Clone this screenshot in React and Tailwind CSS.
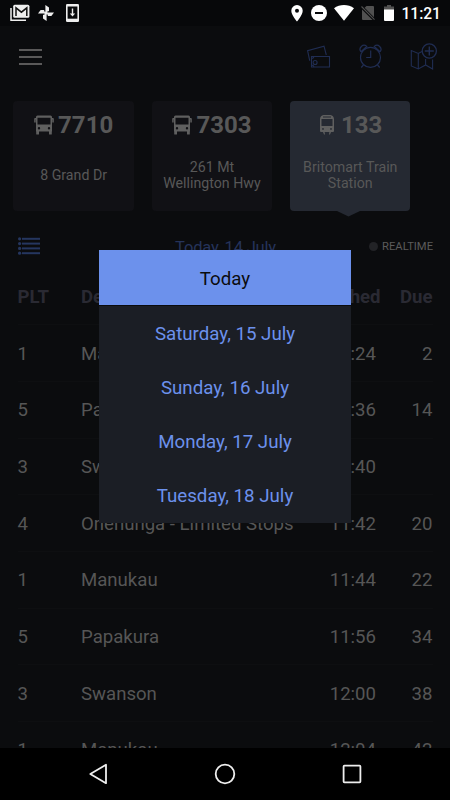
const stops = [
  { id: "7710", name: "8 Grand Dr", type: "bus" },
  { id: "7303", name: "261 Mt Wellington Hwy", type: "bus" },
  { id: "133", name: "Britomart Train Station", type: "train", active: true },
];

const departures = [
  { plt: 1, dest: "Manukau", sched: "11:24", due: 2 },
  { plt: 5, dest: "Papakura", sched: "11:36", due: 14 },
  { plt: 3, dest: "Swanson", sched: "11:40", due: "" },
  { plt: 4, dest: "Onehunga - Limited Stops", sched: "11:42", due: 20 },
  { plt: 1, dest: "Manukau", sched: "11:44", due: 22 },
  { plt: 5, dest: "Papakura", sched: "11:56", due: 34 },
  { plt: 3, dest: "Swanson", sched: "12:00", due: 38 },
  { plt: 1, dest: "Manukau", sched: "12:04", due: 42 },
];

const days = ["Today", "Saturday, 15 July", "Sunday, 16 July", "Monday, 17 July", "Tuesday, 18 July"];

function StatusBar() {
  return (
    <div className="h-[26px] shrink-0 bg-[#07080a] flex items-center justify-between pl-2.5 pr-[9px] text-white">
      <div className="flex items-center">
        <svg width="20" height="18" viewBox="0 0 20 18" fill="none">
          <path d="M1 4v12.2h15" stroke="#eee" strokeWidth="1.5" />
          <rect x="3.2" y="0.8" width="16.2" height="13" rx="1.5" fill="#eee" />
          <path d="M6 12V3.8l5.4 4.4 5.4-4.4V12" stroke="#111" strokeWidth="1.5" />
        </svg>
        <svg className="ml-2" width="16" height="16" viewBox="0 0 16 16" fill="#eee">
          <path d="M7.4 7.4V0L11 2.6V6L7.4 7.4z" />
          <path d="M8.6 7.4H16L13.4 11H10L8.6 7.4z" />
          <path d="M8.6 8.6V16L5 13.4V10l3.6-1.4z" />
          <path d="M7.4 8.6H0L2.6 5H6l1.4 3.6z" />
          <circle cx="8" cy="8" r="1.6" />
        </svg>
        <svg className="ml-3" width="13" height="18" viewBox="0 0 13 18">
          <rect width="13" height="18" rx="1.3" fill="#eee" />
          <rect x="1.6" y="2.5" width="9.8" height="12.2" fill="#08090b" />
          <path d="M5.8 4.6h1.4v5h2L6.5 12.4 3.8 9.6h2z" fill="#eee" />
        </svg>
      </div>
      <div className="flex items-center">
        <svg width="12" height="17" viewBox="0 0 12 17">
          <path fillRule="evenodd" d="M6 0a5.700 5.700 0 0 0-5.700 5.700C.3 10 6 16.500 6 16.500S11.700 10 11.700 5.700A5.700 5.700 0 0 0 6 0zm0 3.700a2 2 0 1 1 0 4 2 2 0 0 1 0-4z" fill="#fff" />
        </svg>
        <svg className="ml-2" width="16" height="16" viewBox="0 0 16 16">
          <circle cx="8" cy="8" r="8" fill="#fff" />
          <rect x="4" y="7" width="8" height="2" fill="#08090b" />
        </svg>
        <svg className="ml-[7px]" width="20" height="16" viewBox="0 0 20 16">
          <path d="M0 3.300C5.800-1.100 14.200-1.100 20 3.300L10 15.700z" fill="#fff" />
        </svg>
        <svg className="ml-[7px]" width="14" height="16" viewBox="0 0 14 16">
          <path d="M5.500 1H12q1 0 1 1v10.200L3.600 2.800zM1 4.600L11.600 15H2q-1 0-1-1z" fill="#515151" />
          <path d="M.5 1.500l13 13.200" stroke="#515151" strokeWidth="1.1" />
        </svg>
        <svg className="ml-[9px]" width="10" height="16" viewBox="0 0 10 16">
          <path d="M3 0h4v1.500h3V5H0V1.500h3z" fill="#515151" />
          <path d="M0 4.500h10V15q0 1-1 1H1q-1 0-1-1z" fill="#fff" />
        </svg>
        <span className="ml-[7.5px] text-[15.6px] leading-none font-medium mt-[3px]">11:21</span>
      </div>
    </div>
  );
}

function BusIcon() {
  return (
    <svg width="20" height="20" viewBox="0 0 20 20" fill="#5f5f5f">
      <path fillRule="evenodd" d="M3.500.5h13q1.500 0 1.500 1.500v14.500h-.2V19q0 .5-.5.500h-1.800q-.5 0-.5-.5v-2.500H5V19q0 .5-.5.500H2.700q-.5 0-.5-.5v-2.500H2V2Q2 .5 3.500.5zM3.500 2.800V9.500h13V2.800zM5 12a1.200 1.200 0 1 0 0 2.400A1.200 1.200 0 0 0 5 12zm10 0a1.200 1.200 0 1 0 0 2.400 1.200 1.200 0 0 0 0-2.400z" />
      <path d="M2.500 3H1Q.200 3 .200 4v3.500h1.500V4.500h.8zM17.500 3H19q.8 0 .8 1v3.500h-1.500V4.500h-.8z" />
    </svg>
  );
}

function TrainIcon() {
  return (
    <svg width="14" height="20" viewBox="0 0 14 20" fill="#5f5f5f">
      <path fillRule="evenodd" d="M3.500 0h7Q13.700.5 14 4v12q0 1-1 1H1q-1 0-1-1V4Q.3.5 3.500 0zM3 1.600v.8h8v-.8zM1.500 4v7h11V4zM3 13a.9.900 0 1 0 0 1.800A.9.900 0 0 0 3 13zm8 0a.9.900 0 1 0 0 1.800.9.900 0 0 0 0-1.800z" />
      <path d="M3 17h1.600l.4 2.500H4zM9.400 17H11l-1 2.500H9z" />
    </svg>
  );
}

function TopBar() {
  return (
    <header className="h-[75px] shrink-0 flex items-start justify-between pl-[19px] pr-3">
      <button className="mt-[23px] w-[23px] flex flex-col gap-[5px]">
        <span className="h-0.5 bg-[#5a5959]" />
        <span className="h-0.5 bg-[#5a5959]" />
        <span className="h-0.5 bg-[#5a5959]" />
      </button>
      <div className="flex mt-4 text-[#202d52]">
        <svg width="24" height="28" viewBox="0 0 24 28" fill="none" stroke="currentColor" strokeWidth="1.1">
          <path d="M4.500 14.500H22.500V25H4.500zM3.200 18.200H2.600L.6 8.700 17 4.200 19.300 13" />
          <circle cx="8.1" cy="20.5" r="2" />
          <path d="M4.500 16.500q2 0 2.500-2M4.500 23q2 0 2.500 2" />
        </svg>
        <svg className="ml-7" width="24" height="28" viewBox="0 0 24 28" fill="none" stroke="currentColor" strokeWidth="1.2">
          <circle cx="11.5" cy="15.4" r="10" />
          <path d="M11.700 8.500V15.500H7.200M4.500 23L2.200 25.500M18.500 23l2.200 2.500M2 9.800a3.900 3.900 0 0 1 5.700-5.300L2 9.800M21 9.800a3.900 3.900 0 0 0-5.700-5.300L21 9.800" />
        </svg>
        <svg className="ml-[27px]" width="28" height="29" viewBox="0 0 28 29" fill="none" stroke="currentColor" strokeWidth="1.1">
          <path d="M12 9.500L8.300 11.500 1.300 8.500V24l7 3 7.300-4 7 4V17.500M8.300 11.500V27M15.600 17v6" />
          <circle cx="19.3" cy="9" r="7.1" strokeWidth="1.3" />
          <path d="M19.300 4.500v9M14.800 9h9" strokeWidth="1.4" />
        </svg>
      </div>
    </header>
  );
}

function StopCard({ stop }) {
  return (
    <div className={`relative w-[120.5px] h-[109.5px] shrink-0 rounded-[4px] flex flex-col items-center text-[#585858] ${stop.active ? "bg-[#252932]" : "bg-[#111115]"}`}>
      <div className="mt-2 h-8 flex items-center gap-1">
        {stop.type === "bus" ? <BusIcon /> : <span className="ml-0.5 mr-[3px]"><TrainIcon /></span>}
        <span className="text-2xl font-bold">{stop.id}</span>
      </div>
      <div className="mt-2.5 h-12 px-2 flex items-center text-center text-[14.2px] leading-[16.5px]">{stop.name}</div>
      {stop.active && (
        <svg className="absolute top-full left-[47px]" width="23" height="6" viewBox="0 0 23 6">
          <path d="M0 0h23L11.500 5.500z" fill="#252932" />
        </svg>
      )}
    </div>
  );
}

function DateMenu() {
  return (
    <ul className="absolute left-[99px] top-[250px] w-[252px] h-[273px] bg-[#1b1e25] text-[18.7px] text-[#6c91ec] text-center flex flex-col">
      {days.map((day, i) => (
        <li
          key={day}
          className={`flex items-center justify-center ${i === 0 ? "h-14 pt-[3px] bg-[#6c91ec] text-[#0b0c0e] border-b border-[#0b0c0e]" : "flex-1 pt-px"}`}
        >
          {day}
        </li>
      ))}
    </ul>
  );
}

function NavBar() {
  return (
    <nav className="h-[52px] shrink-0 bg-black flex items-center justify-between px-[88px]">
      <svg width="20" height="22" viewBox="0 0 20 22" fill="none" stroke="#eee" strokeWidth="1.8">
        <path d="M18 1.800v18.400L2.300 11z" strokeLinejoin="round" />
      </svg>
      <svg width="22" height="22" viewBox="0 0 22 22" fill="none" stroke="#eee" strokeWidth="1.8">
        <circle cx="11" cy="11" r="9.3" />
      </svg>
      <svg width="20" height="20" viewBox="0 0 20 20" fill="none" stroke="#eee" strokeWidth="1.8">
        <rect x="1.6" y="1.6" width="16.8" height="16.8" rx="0.8" />
      </svg>
    </nav>
  );
}

export default function App() {
  return (
    <div className="relative w-[450px] h-[800px] overflow-hidden bg-[#0b0c0e] font-[Roboto,sans-serif] flex flex-col">
      <StatusBar />
      <TopBar />

      <div className="shrink-0 flex gap-[17.8px] pl-[13.4px]">
        {stops.map((stop) => (
          <StopCard key={stop.id} stop={stop} />
        ))}
      </div>

      <div className="shrink-0 h-[58px] pt-[13px] pl-[18px] pr-[17px] grid grid-cols-[1fr_auto_1fr] items-center">
        <svg width="22" height="18" viewBox="0 0 22 18" fill="#25365f">
          {[1.8, 6.6, 11.4, 16.2].map((y) => (
            <g key={y}>
              <circle cx="1.6" cy={y} r="1.6" />
              <rect x="4" y={y - 1} width="18" height="2" />
            </g>
          ))}
        </svg>
        <span className="pt-1 text-[16.5px] tracking-[-0.2px] text-[#25335a]">Today, 14 July</span>
        <span className="pt-0.5 justify-self-end flex items-center gap-1 text-[11.2px] text-[#5b5b5b]">
          <i className="w-[9px] h-[9px] rounded-full bg-[#222326]" />
          REALTIME
        </span>
      </div>

      {/* departures board */}
      <div className="flex-1 min-h-0 overflow-hidden px-[17.5px] text-[18.6px] text-[#565656]">
        <div className="h-[56.7px] pt-[3px] flex items-center font-bold text-[#2a2a33] border-b border-[#0e0f11]">
          <span className="w-[63.5px]">PLT</span>
          <span className="w-[247.5px]">Destination</span>
          <span>Sched</span>
          <span className="ml-auto">Due</span>
        </div>
        {departures.map((d, i) => (
          <div key={i} className="h-[56.7px] pt-[3px] flex items-center border-b border-[#0e0f11]">
            <span className="w-[63.5px]">{d.plt}</span>
            <span className="flex-1">{d.dest}</span>
            <span>{d.sched}</span>
            <span className="w-[56.5px] text-right">{d.due}</span>
          </div>
        ))}
      </div>

      <NavBar />
      <DateMenu />
    </div>
  );
}
